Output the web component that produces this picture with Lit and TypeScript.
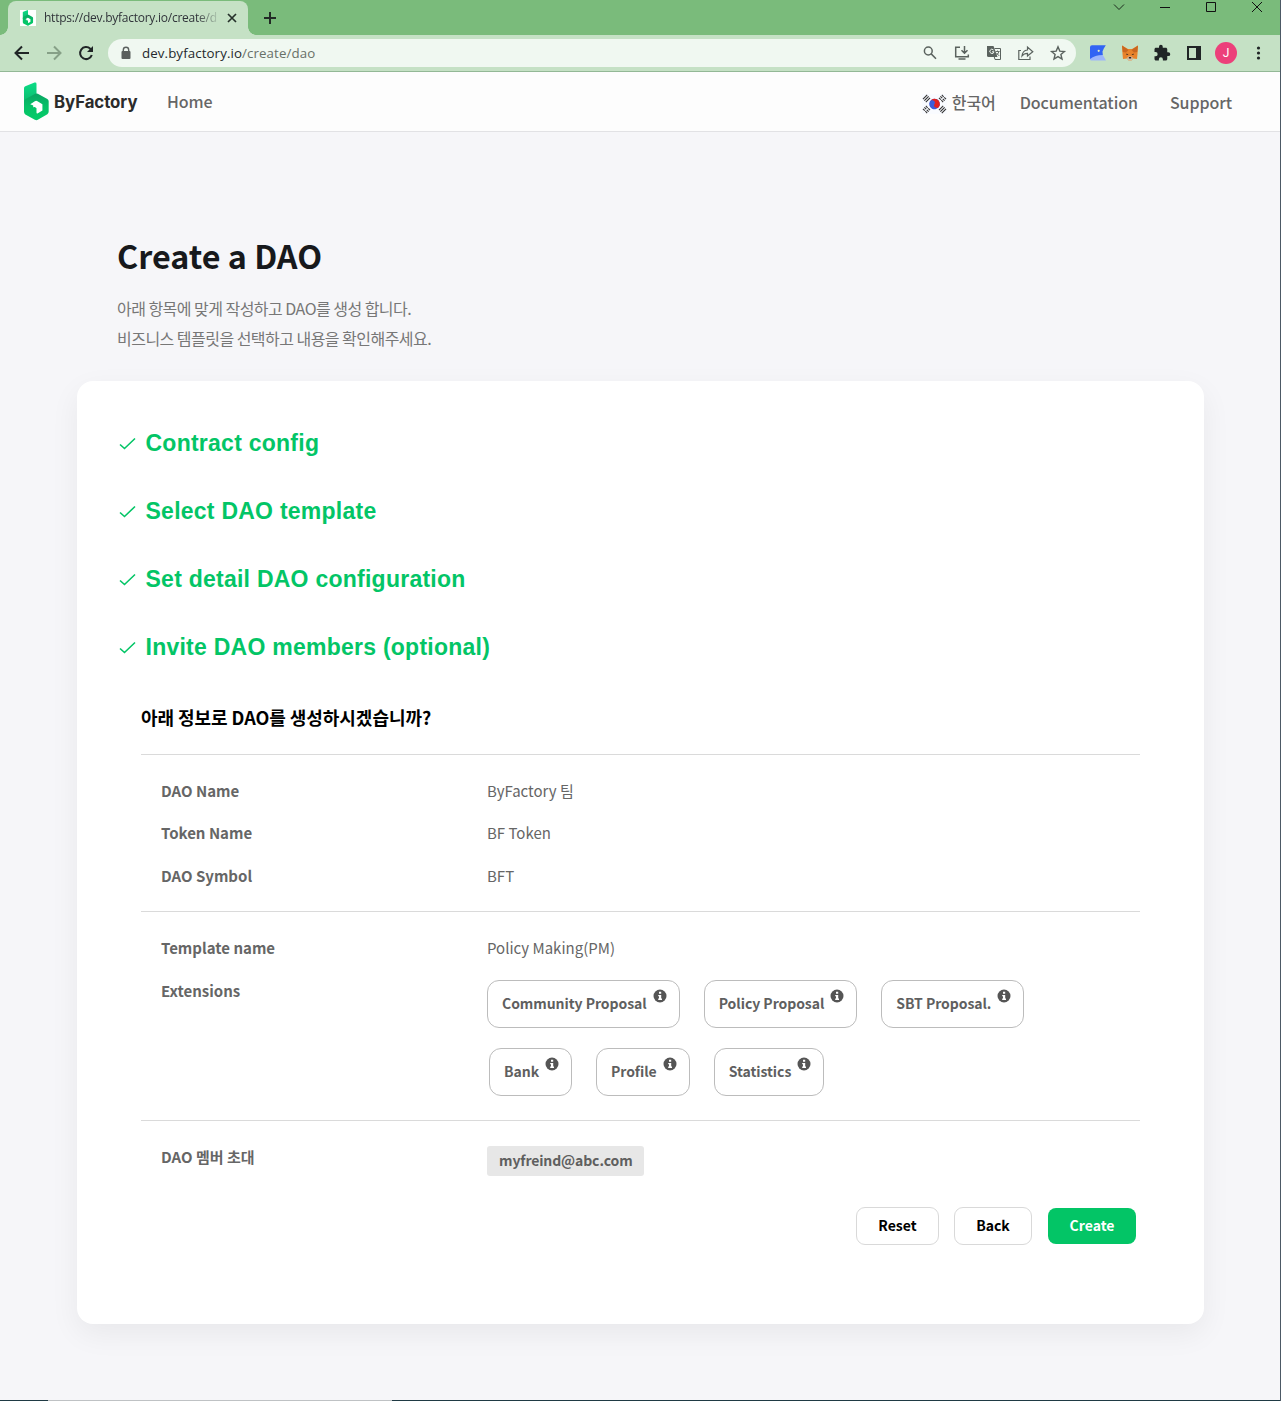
import { LitElement, html, css, svg } from "lit";
import { customElement, property } from "lit/decorators.js";

const logo = html`<svg viewBox="72 246 76 117" width="100%" height="100%">
  <defs>
    <linearGradient id="t" x1="0" y1="0" x2="0" y2="1"><stop offset="0" stop-color="#0cdc86"/><stop offset="1" stop-color="#0cb86c"/></linearGradient>
    <linearGradient id="h" x1="0" y1="0" x2="0" y2="1"><stop offset="0" stop-color="#0aa463"/><stop offset="0.5" stop-color="#06c167"/><stop offset="1" stop-color="#04cc68"/></linearGradient>
  </defs>
  <path fill="url(#t)" d="M72 264 Q72 260 76 258 L104 247 Q110 245 110 251 V290 L72 312Z"/>
  <path fill="url(#h)" d="M72 305 Q72 300 76 298 L106 281 Q110 279 114 281 L143 297 Q147 300 147 304 V336 Q147 340 143 343 L114 360 Q110 363 105 360 L76 344 Q72 341 72 336Z"/>
  <path fill="#fff" d="M91 313 L105 304 Q109 301 113 304 L128 313 V332 L113 341 Q110 342 110 338 V325 L105 321 L100 322 V317Z"/>
</svg>`;

@customElement("browser-chrome")
export class BrowserChrome extends LitElement {
  static styles = css`
    :host { display: block; font-family: "Open Sans", "Noto Sans CJK KR", sans-serif; }
    svg { display: block; flex: none; }
    .strip { height: 35px; background: #7abb7b; display: flex; box-sizing: border-box; }
    .tab { width: 240px; height: 34px; margin: 1px 0 0 8px; border-radius: 8px 8px 0 0; background: #c5e1c5; display: flex; align-items: center; box-sizing: border-box; padding: 0 10px 0 12px; position: relative; }
    .tab::before, .tab::after { content: ""; position: absolute; bottom: 0; width: 8px; height: 8px; }
    .tab::before { left: -8px; background: radial-gradient(circle at 0 0, transparent 7.5px, #c5e1c5 8px); }
    .tab::after { right: -8px; background: radial-gradient(circle at 100% 0, transparent 7.5px, #c5e1c5 8px); }
    .fav { width: 16px; height: 16px; background: #fff; display: flex; justify-content: center; box-sizing: border-box; padding: 0 2px; }
    .title { width: 176px; margin-left: 8px; font-size: 12px; letter-spacing: -0.25px; line-height: 20px; color: #30343a; white-space: nowrap; -webkit-mask-image: linear-gradient(90deg, #000 152px, transparent 177px); mask-image: linear-gradient(90deg, #000 152px, transparent 177px); }
    .close { margin-left: 7px; }
    .plus { margin: 11px 0 0 15px; }
    .win { margin-left: auto; display: flex; gap: 34px; padding: 1px 17px 0 0; }
    .bar { height: 36px; background: #c5e1c5; border-bottom: 1px solid #93b896; display: flex; align-items: center; padding: 0 13px 0 13px; }
    .nav { display: flex; gap: 14px; width: 95px; }
    .url { flex: 1; height: 28px; border-radius: 14px; background: #f0f8f1; display: flex; align-items: center; padding: 0 9px 0 12px; margin-right: 13px; }
    .addr { margin-left: 10px; font-size: 13.3px; letter-spacing: 0.1px; line-height: 20px; color: #24282c; white-space: nowrap; }
    .path { color: #687068; }
    .acts { margin-left: auto; display: flex; gap: 14px; }
    .exts { display: flex; align-items: center; gap: 14px; }
    .me { width: 22px; height: 22px; margin: 0 -2px; border-radius: 50%; background: #ec407a; color: #fff; font: 12px/22px Roboto, sans-serif; text-align: center; }
  `;

  render() {
    return html`
      <div class="strip">
        <div class="tab">
          <div class="fav">${logo}</div>
          <div class="title">https://dev.byfactory.io/create/d</div>
          <svg class="close" width="10" height="10" viewBox="0 0 10 10" stroke="#25302a" stroke-width="1.7"><path d="M1 1 9 9M9 1 1 9"/></svg>
        </div>
        <svg class="plus" width="14" height="14" viewBox="0 0 14 14" stroke="#222a25" stroke-width="2"><path d="M7 1V13M1 7H13"/></svg>
        <div class="win">
          <svg width="12" height="12" viewBox="0 0 12 12" fill="none" stroke="#1c2a1d"><path d="M1 3.5 6 8.5 11 3.5"/></svg>
          <svg width="12" height="12" viewBox="0 0 12 12" fill="none" stroke="#111"><path d="M1 6.5H11"/></svg>
          <svg width="12" height="12" viewBox="0 0 12 12" fill="none" stroke="#111"><path d="M1.500 1.500H10.500V10.500H1.500Z"/></svg>
          <svg width="12" height="12" viewBox="0 0 12 12" fill="none" stroke="#111"><path d="M1 1 11 11M11 1 1 11"/></svg>
        </div>
      </div>
      <div class="bar">
        <div class="nav">
          <svg width="18" height="18" viewBox="0 0 18 18" fill="none" stroke="#202526" stroke-width="2"><path d="M16 9H3M9 2.500 2.500 9 9 15.500"/></svg>
          <svg width="18" height="18" viewBox="0 0 18 18" fill="none" stroke="#86a087" stroke-width="2"><path d="M2 9H15M9 2.500 15.500 9 9 15.500"/></svg>
          <svg width="18" height="18" viewBox="0 0 18 18" fill="none" stroke="#202526" stroke-width="2"><path d="M14.800 11A6 6 0 1 1 13.300 4.800L15 6.500"/><path d="M16 2V8H10Z" fill="#202526" stroke="none"/></svg>
        </div>
        <div class="url">
          <svg width="12" height="14" viewBox="0 0 12 14"><path d="M3.300 6V4A2.700 2.700 0 0 1 8.700 4V6" fill="none" stroke="#5b605e" stroke-width="1.400"/><rect x="1.500" y="5" width="9" height="8" rx="1" fill="#5b605e"/></svg>
          <div class="addr">dev.byfactory.io<span class="path">/create/dao</span></div>
          <div class="acts">
            <svg width="18" height="18" viewBox="0 0 18 18" fill="none" stroke="#5a625e" stroke-width="1.500"><circle cx="7.300" cy="7" r="3.900"/><path d="M10.200 9.900 15 14.700"/></svg>
            <svg width="18" height="18" viewBox="0 0 18 18" fill="none" stroke="#5a625e" stroke-width="1.500"><path d="M7 3.200H2.700V12.800H15.300V10.500M5.500 15H12.500M11.500 2V9M8.500 6.300 11.500 9.300 14.500 6.300"/></svg>
            <svg width="18" height="18" viewBox="0 0 18 18"><path d="M2 2H8.500L12.500 13H3.500A1.500 1.500 0 0 1 2 11.500Z" fill="#5a625e"/><path d="M9.500 4.500H15.500V15.500H10L9.300 13" fill="none" stroke="#5a625e"/><path d="M8.500 6A2.100 2.100 0 1 0 9 7.800H7" fill="none" stroke="#eef6ef"/><path d="M10.500 7.500H14.500M12.500 6.500V7.500M14 7.500Q13 10.500 11 11.500M11.500 9 14.300 12" fill="none" stroke="#5a625e" stroke-width=".9"/></svg>
            <svg width="18" height="18" viewBox="0 0 18 18" fill="none" stroke="#5a625e" stroke-width="1.200"><path d="M4 6.500H1.800V15.500H13V12.500M5 12C5.300 8.500 7.500 6.300 10.500 6V3L15.800 7.700 10.500 12V9.300C8 9.300 6.300 10.200 5 12Z"/></svg>
            <svg width="18" height="18" viewBox="0 0 18 18" fill="none" stroke="#5a625e" stroke-width="1.400"><path d="M9 2.800 10.800 7.100 15.400 7.500 11.900 10.500 13 15 9 12.600 5 15 6.100 10.500 2.600 7.500 7.200 7.100Z"/></svg>
          </div>
        </div>
        <div class="exts">
          <svg width="18" height="18" viewBox="0 0 18 18"><path d="M1 12.500 13.500 10.500 17 16.500H2.500Q1 16.500 1 15Z" fill="#9db6fb"/><path d="M3 1.200H16.800L14.800 4.500 13.500 7.500 13.800 11Q6 11 1 15V3.200Q1 1.200 3 1.200Z" fill="#3164f4"/><circle cx="9.700" cy="6.800" r="1.100" fill="#e8efc0"/></svg>
          <svg width="18" height="18" viewBox="0 0 18 18"><path d="M1 1.500 7 5H11L17 1.500 16.500 10 16 15 12 14.500 10.500 16.500H7.500L6 14.500 2 15 1.500 10Z" fill="#e8832b"/><path d="M1 1.500 7.500 6 5 8.500 1.800 8ZM17 1.500 10.500 6 13 8.500 16.200 8Z" fill="#c9661f"/><path d="M6 14 7.500 12.500H10.500L12 14 10.500 16.500H7.500Z" fill="#d5bfa8"/><path d="M5.500 9.500 7.500 10.800 5.500 11ZM12.500 9.500 10.500 10.800 12.500 11ZM7.800 13H10.200V14.500H7.800Z" fill="#30231d"/></svg>
          <svg width="18" height="18" viewBox="0 0 24 24" fill="#202526"><path d="M20.500 11H19V7c0-1.100-.9-2-2-2h-4V3.500a2.500 2.500 0 0 0-5 0V5H4c-1.100 0-2 .9-2 2v3.800h1.500a2.700 2.700 0 0 1 0 5.400H2V20c0 1.100.9 2 2 2h3.800v-1.500a2.700 2.700 0 0 1 5.400 0V22H17c1.100 0 2-.9 2-2v-4h1.500a2.500 2.500 0 0 0 0-5z"/></svg>
          <svg width="18" height="18" viewBox="0 0 18 18"><path d="M3 3H15V15H3Z" fill="none" stroke="#202526" stroke-width="2"/><path d="M11 2H16V16H11Z" fill="#202526"/></svg>
          <div class="me">J</div>
          <svg width="18" height="18" viewBox="0 0 18 18" fill="#202526"><circle cx="9.500" cy="4" r="1.600"/><circle cx="9.500" cy="9" r="1.600"/><circle cx="9.500" cy="14" r="1.600"/></svg>
        </div>
      </div>`;
  }
}

@customElement("site-header")
export class SiteHeader extends LitElement {
  static styles = css`
    :host { display: flex; align-items: center; height: 59px; background: #fdfdfd; border-bottom: 1px solid #e2e2e5; padding: 0 48px 0 24px; box-sizing: content-box; font: 500 16px/24px "Noto Sans CJK KR", sans-serif; color: #666; white-space: nowrap; }
    .logo { width: 25px; height: 39px; }
    .brand { width: 83px; margin: 0 0 0 5px; font: 700 16.8px/24px Inter, sans-serif; letter-spacing: -0.05px; color: #2b2b2b; }
    .home { margin: -2px 0 0 30px; letter-spacing: -0.1px; }
    .right { margin-left: auto; display: flex; align-items: center; }
    .flag { display: block; margin: 4px 5px 0 0; }
    .lang { width: 44px; }
    .doc { margin-left: 24px; letter-spacing: -0.06px; }
    .sup { margin-left: 32px; letter-spacing: -0.06px; }
  `;

  render() {
    const bars = (x: number, y: number, r: number) => svg`<g transform="translate(${x} ${y}) rotate(${r})"><path d="M-3 -2H3M-3 0H3M-3 2H3" stroke="#333" stroke-width="1.100" stroke-dasharray="${r > 0 ? "2.600 .8" : "6"}"/></g>`;
    return html`
      <div class="logo">${logo}</div>
      <div class="brand">ByFactory</div>
      <div class="home">Home</div>
      <div class="right">
        <svg class="flag" width="25" height="20" viewBox="0 0 25 20">
          <rect width="25" height="20" fill="#f9fbff"/>
          <g transform="rotate(28 12.500 10)"><circle cx="12.500" cy="10" r="5.300" fill="#3d5bd9"/><path d="M7.200 10A5.300 5.300 0 0 1 17.800 10A2.650 2.650 0 0 1 12.500 10A2.650 2.650 0 0 0 7.200 10Z" fill="#e02020"/></g>
          ${bars(4.5, 4.5, -45)}${bars(20.5, 4.5, 45)}${bars(4.5, 15.5, 45)}${bars(20.5, 15.5, -45)}
        </svg>
        <div class="lang">한국어</div>
        <div class="doc">Documentation</div>
        <div class="sup">Support</div>
      </div>`;
  }
}

@customElement("extension-chip")
export class ExtensionChip extends LitElement {
  @property() label = "";
  static styles = css`
    :host { display: flex; box-sizing: border-box; height: 48px; border: 1px solid #bcbcbc; border-radius: 12px; padding: 0 12px 0 14px; font: 700 14px/45px "Noto Sans CJK KR", sans-serif; letter-spacing: -0.05px; color: #5f5f5f; white-space: nowrap; }
    svg { display: block; margin: 8px 0 0 6px; }
  `;
  render() {
    return html`<span>${this.label}</span><svg width="14" height="14" viewBox="0 0 14 14"><circle cx="7" cy="7" r="6.500" fill="#555"/><path d="M6 2.800H8.200V4.800H6ZM5.200 6H8.200V9.500H9V11H5.200V9.500H6V7.300H5.200Z" fill="#fff"/></svg>`;
  }
}

const steps = ["Contract config", "Select DAO template", "Set detail DAO configuration", "Invite DAO members (optional)"];
const basics = [["DAO Name", "ByFactory 팀"], ["Token Name", "BF Token"], ["DAO Symbol", "BFT"]];
const extensionRows = [["Community Proposal", "Policy Proposal", "SBT Proposal."], ["Bank", "Profile", "Statistics"]];

@customElement("app-root")
export class AppRoot extends LitElement {
  static styles = css`
    :host { display: flex; flex-direction: column; box-sizing: border-box; width: 1281px; height: 1401px; border-right: 1px solid #4c5965; background: #f6f6f9; font-family: "Noto Sans CJK KR", sans-serif; overflow: hidden; }
    .page { flex: 1; padding: 99px 76px 0 77px; }
    h1 { margin: 0 0 0 40px; font-size: 32.3px; font-weight: 700; line-height: 48px; color: #17191c; }
    .intro { margin: 14px 0 28px 40px; font-size: 16px; line-height: 30px; letter-spacing: -0.53px; color: #777; }
    .card { height: 943px; box-sizing: border-box; border-radius: 16px; background: #fff; box-shadow: 0 10px 30px rgba(0, 0, 0, 0.06); padding: 28px 64px 0; }
    .step { display: flex; align-items: center; height: 68px; margin-left: -22px; font: 700 23px/30px "Liberation Sans", Arial, sans-serif; letter-spacing: 0.25px; color: #03c566; }
    .step svg { margin-right: 9.500px; }
    h2 { margin: 21px 0 22px; font-size: 18px; line-height: 30px; letter-spacing: -0.05px; font-weight: 700; color: #000; }
    .group { border-top: 1px solid #dadada; padding: 15px 0 14px 20px; }
    .row { display: grid; grid-template-columns: 326px 1fr; min-height: 42.400px; font-size: 15px; line-height: 42px; color: #666; }
    .extgroup .row { min-height: 42px; }
    .key { font-weight: 700; }
    .chips { display: flex; gap: 24px; }
    .exts { padding-top: 11px; display: flex; flex-direction: column; gap: 20px; }
    .extkey { padding-top: 1px; }
    .second { padding-left: 2px; }
    .extgroup { padding-bottom: 24px; }
    .mail { justify-self: start; height: 30px; margin-top: 10px; padding: 0 11.500px 0 12px; border-radius: 3px; background: #e7e7e7; font-size: 14px; font-weight: 700; line-height: 29px; letter-spacing: -0.12px; color: #5f5f5f; }
    .buttons { display: flex; justify-content: flex-end; align-items: center; padding-right: 4px; margin-top: 14px; }
    .btn { box-sizing: border-box; height: 38px; border: 1px solid #d9d9d9; border-radius: 9px; font-size: 14px; font-weight: 700; line-height: 35px; text-align: center; color: #000; }
    .reset { width: 83px; margin-right: 15px; }
    .back { width: 78px; margin-right: 16px; }
    .create { width: 88px; height: 36px; border: 0; border-radius: 8px; background: #03c566; color: #fff; }
    .edge { height: 1px; background: linear-gradient(90deg, #1f3a44 48px, #bfc2c4 48px, #bfc2c4 392px, #1f3a44 392px); }
  `;

  render() {
    return html`
      <browser-chrome></browser-chrome>
      <site-header></site-header>
      <div class="page">
        <h1>Create a DAO</h1>
        <div class="intro">아래 항목에 맞게 작성하고 DAO를 생성 합니다.<br />비즈니스 템플릿을 선택하고 내용을 확인해주세요.</div>
        <div class="card">
          ${steps.map((s) => html`<div class="step"><svg width="17" height="14" viewBox="0 0 17 14" fill="none" stroke="#03c566" stroke-width="1.600"><path d="M1 8.500 5.500 12.500 16 2.500"/></svg>${s}</div>`)}
          <h2>아래 정보로 DAO를 생성하시겠습니까?</h2>
          <div class="group">
            ${basics.map(([k, v]) => html`<div class="row"><div class="key">${k}</div><div>${v}</div></div>`)}
          </div>
          <div class="group extgroup">
            <div class="row"><div class="key">Template name</div><div>Policy Making(PM)</div></div>
            <div class="row">
              <div class="key extkey">Extensions</div>
              <div class="exts">
                ${extensionRows.map((r, i) => html`<div class="chips ${i ? "second" : ""}">${r.map((l) => html`<extension-chip label=${l}></extension-chip>`)}</div>`)}
              </div>
            </div>
          </div>
          <div class="group">
            <div class="row"><div class="key">DAO 멤버 초대</div><div class="mail">myfreind@abc.com</div></div>
          </div>
          <div class="buttons">
            <div class="btn reset">Reset</div>
            <div class="btn back">Back</div>
            <div class="btn create">Create</div>
          </div>
        </div>
      </div>
      <div class="edge"></div>`;
  }
}
